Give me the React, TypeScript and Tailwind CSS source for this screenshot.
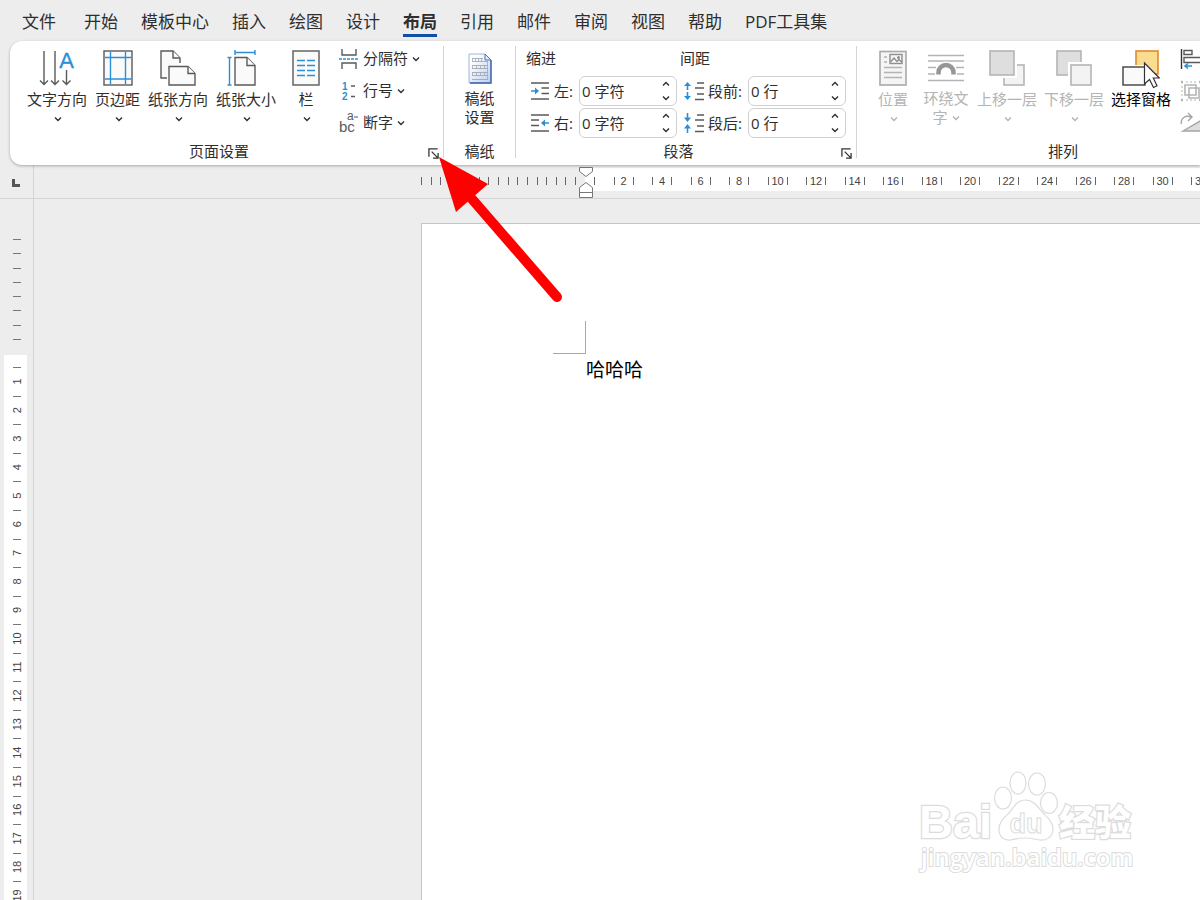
import type { ReactNode } from "react"

const tabs = ["开始", "模板中心", "插入", "绘图", "设计", "布局", "引用", "邮件", "审阅", "视图", "帮助", "PDF工具集"]

const DARK = "#5a5a5a"
const BLUE = "#2b8fd6"
const GREY = "#b4b4b4"

function Chevron({ up }: { up?: boolean }) {
  return (
    <svg width="8" height="6" viewBox="0 0 8 6" fill="none" stroke="currentColor" strokeWidth="1.4" className="shrink-0">
      <path d={up ? "M1 4.5 4 1.5 7 4.5" : "M1 1.5 4 4.5 7 1.5"} />
    </svg>
  )
}

type BigProps = { icon: ReactNode; label: string; chevron?: boolean; disabled?: boolean; className?: string }

function BigButton({ icon, label, chevron = true, disabled, className = "" }: BigProps) {
  return (
    <button disabled={disabled} className={`flex shrink-0 flex-col items-center pt-[3px] text-[15px] leading-5 whitespace-nowrap disabled:text-[#b4b4b4] ${className}`}>
      {icon}
      <span className="mt-0.5">{label}</span>
      {chevron && <span className="ml-0.5 flex h-5 items-center"><Chevron /></span>}
    </button>
  )
}

function SmallButton({ icon, label }: { icon: ReactNode; label: string }) {
  return (
    <button className="flex h-[26px] items-center text-[15px] leading-5 whitespace-nowrap">
      <span className="mr-1">{icon}</span>
      <span className="pb-0.5">{label}</span>
      <span className="ml-1"><Chevron /></span>
    </button>
  )
}

function Launcher({ name }: { name: string }) {
  return (
    <button aria-label={name} className="mr-1 pt-1">
      <svg width="11" height="11" viewBox="0 0 12 12" fill="none" stroke="#333" strokeWidth="1.4">
        <path d="M1 9.500V1h9.500M4 4l6.500 6.500M11 5.500V11H5.500" />
      </svg>
    </button>
  )
}

function Group({ title, launcher, className = "", children }: { title: string; launcher?: boolean; className?: string; children: ReactNode }) {
  return (
    <section aria-label={title} className={`shrink-0 ${className}`}>
      <div className="flex h-[95px] items-start">{children}</div>
      <div className="flex h-5 items-center">
        <h2 className="flex-1 text-center text-[15px] leading-5">{title}</h2>
        {launcher && <Launcher name={title} />}
      </div>
    </section>
  )
}

function Divider() {
  return <div className="h-28 w-px shrink-0 bg-[#d6d6d6]" />
}

function SpinField({ id, icon, label, value, labelClass }: { id: string; icon: ReactNode; label: string; value: string; labelClass: string }) {
  return (
    <div className="flex items-center pl-1">
      {icon}
      <label htmlFor={id} className={`ml-1 shrink-0 text-[15px] leading-5 whitespace-nowrap ${labelClass}`}>{label}</label>
      <div className="flex h-[30px] w-[98px] rounded-md border border-[#d0d0d0] bg-white">
        <input id={id} defaultValue={value} className="w-0 flex-1 bg-transparent pl-0.5 text-[15px] outline-none" />
        <div className="flex w-5 flex-col justify-between py-[3px]">
          <button aria-label={`${label} +`} className="flex h-2 items-center justify-center"><Chevron up /></button>
          <button aria-label={`${label} -`} className="flex h-2 items-center justify-center"><Chevron /></button>
        </div>
      </div>
    </div>
  )
}

function TextDirectionIcon() {
  return (
    <svg width="36" height="38" viewBox="0 0 36 38" fill="none" stroke={DARK} strokeWidth="1.4">
      <path d="M5 2v33M1 31.500l4 4 4-4M16 2v33M12 31.500l4 4 4-4M27.500 21v14M23.500 31.500l4 4 4-4" />
      <text x="27.500" y="19" textAnchor="middle" fontSize="22" stroke={BLUE} strokeWidth="0.3" fill={BLUE} className="font-['Liberation_Sans']">A</text>
    </svg>
  )
}

function MarginsIcon() {
  return (
    <svg width="30" height="38" viewBox="0 0 30 38" fill="none" strokeWidth="1.4">
      <rect x="1" y="2" width="28" height="34" fill="#fafafa" stroke={DARK} />
      <path d="M7.500 3v32M22.500 3v32M2 8.500h26M2 30h26" stroke={BLUE} />
    </svg>
  )
}

function OrientationIcon() {
  return (
    <svg width="36" height="38" viewBox="0 0 36 38" fill="#fafafa" stroke={DARK} strokeWidth="1.4">
      <path d="M7 29H1V2h12l7 7v5" />
      <path d="M13 2v7h7" />
      <path d="M9 17.500h19l7 7V36H9z" />
      <path d="M28 17.500v7h7" />
    </svg>
  )
}

function SizeIcon() {
  return (
    <svg width="40" height="38" viewBox="0 0 40 38" fill="#fafafa" stroke={DARK} strokeWidth="1.4">
      <path d="M9 8.500h12l8 8V36H9z" />
      <path d="M21 8.500v8h8" />
      <path d="M9 3.500h20M9 1v5M29 1v5M3.500 9v27M1.500 8.500h4M1.500 36h4" stroke={BLUE} />
    </svg>
  )
}

function ColumnsIcon() {
  return (
    <svg width="28" height="38" viewBox="0 0 28 38" fill="#fafafa" strokeWidth="1.4">
      <rect x="1" y="2" width="26" height="34" stroke={DARK} />
      <path d="M5 11.500h8M15 11.500h8M5 16.500h8M15 16.500h8M5 21.500h8M15 21.500h8M5 26.500h8M15 26.500h8" stroke={BLUE} />
    </svg>
  )
}

function BreaksIcon() {
  return (
    <svg width="20" height="20" viewBox="0 0 20 20" fill="none" stroke={DARK} strokeWidth="1.4">
      <path d="M3 0v6h14V0M3 20v-6h14v6" />
      <path d="M0 10h20" stroke={BLUE} strokeDasharray="3 1" />
    </svg>
  )
}

function LineNumbersIcon() {
  return (
    <svg width="20" height="24" viewBox="0 0 20 24" className="font-['Liberation_Sans']">
      <text x="3" y="11" fontSize="10" fontWeight="700" fill={BLUE}>1</text>
      <text x="3" y="21" fontSize="10" fontWeight="700" fill={BLUE}>2</text>
      <path d="M12 7h4M12 17.500h4" stroke={DARK} strokeWidth="1.4" />
    </svg>
  )
}

function HyphenIcon() {
  return (
    <svg width="20" height="26" viewBox="0 0 20 26" fill={DARK} className="font-['Liberation_Sans']">
      <text x="8" y="10" fontSize="12">a</text>
      <text x="0" y="22" fontSize="15">bc</text>
      <path d="M15 7h4" stroke={DARK} strokeWidth="1.2" />
    </svg>
  )
}

function ManuscriptIcon() {
  return (
    <svg width="26" height="38" viewBox="0 0 26 38">
      <defs>
        <linearGradient id="paper" x1="0" y1="0" x2="1" y2="1">
          <stop offset="0.2" stopColor="#fdfeff" />
          <stop offset="1" stopColor="#b9cdf0" />
        </linearGradient>
      </defs>
      <path d="M2 5h16l6 6v23H2z" fill="url(#paper)" stroke="#9db4da" />
      <path d="M24 11v23H3" fill="none" stroke="#3c62a8" strokeWidth="1.4" />
      <path d="M18 5v6h6z" fill="#dbe8fb" stroke="#4f79b8" />
      <path d="M5 9.500h11M5 12.500h16M5 16.500h16M5 19.500h16M5 23.500h16M5 26.500h16M5 30.500h16" stroke="#9a9fab" strokeWidth="0.8" />
      <path d="M5.500 9v3M8.500 9v3M11.500 9v3M14.500 9v3M5.500 16v4M9.500 16v4M13.500 16v4M17.500 16v4M20.500 12v18M5.500 23v4M9.500 23v4M13.500 23v4M17.500 23v4" stroke="#a5a9b4" strokeWidth="0.8" />
    </svg>
  )
}

function IndentIcon({ right }: { right?: boolean }) {
  return (
    <svg width="20" height="18" viewBox="0 0 20 18" fill="none" stroke={DARK} strokeWidth="1.4" className="shrink-0">
      <path d={right ? "M1 1h18M1 6h8M1 11.500h8M1 17h18" : "M1 1h18M11.500 6H19M11.500 11.500H19M1 17h18"} />
      <path d={right ? "M19 9h-6" : "M1 9h6"} stroke={BLUE} strokeWidth="1.6" />
      <path d={right ? "M15 5.500 11 9l4 3.500z" : "M5 5.500 9 9l-4 3.500z"} fill={BLUE} stroke="none" />
    </svg>
  )
}

function SpacingIcon({ after }: { after?: boolean }) {
  return (
    <svg width="20" height="20" viewBox="0 0 20 20" fill="none" stroke={DARK} strokeWidth="1.4" className="shrink-0">
      <path d={after ? "M13 2h7M11 7h9M13 13h7M11 18.500h9" : "M13 2h7M11 7h9M13 13h7M11 18.500h9"} />
      <path d={after ? "M3.500 0v5M3.500 20v-5" : "M3.500 3v6M3.500 11v6"} stroke={BLUE} strokeWidth="1.6" />
      <path d={after ? "M0 4.500h7L3.500 9zM0 15.500h7L3.500 11z" : "M0 5h7L3.500 1zM0 15h7l-3.500 4z"} fill={BLUE} stroke="none" />
    </svg>
  )
}

function PositionIcon() {
  return (
    <svg width="30" height="38" viewBox="0 0 30 38" fill="none" stroke={GREY} strokeWidth="1.4">
      <rect x="2" y="2.500" width="26" height="33.500" fill="#f5f5f5" stroke="#a9a9a9" strokeWidth="1.6" />
      <path d="M6 8h3M6 13h3M6 18.500h18M6 23.500h18M6 28.500h18" />
      <rect x="12" y="5.500" width="12" height="9" stroke="#8e8e8e" />
      <path d="M12.500 13l3.500-4 3 3.500 2-2 3 3" stroke="#8e8e8e" />
      <circle cx="20.500" cy="8.500" r="0.8" stroke="#8e8e8e" />
    </svg>
  )
}

function WrapIcon() {
  return (
    <svg width="36" height="38" viewBox="0 0 36 38" fill="none" stroke={GREY} strokeWidth="1.4">
      <path d="M0 6.500h36M0 12h36M0 18.500h8M28 18.500h8M0 25h7M29 25h7M0 31.500h36" />
      <path d="M10.500 25.500v-2a7.500 7.500 0 0 1 15 0v2" stroke="#fff" strokeWidth="7" />
      <path d="M10.500 25.500v-2a7.500 7.500 0 0 1 15 0v2" stroke="#969696" strokeWidth="4.500" />
    </svg>
  )
}

function LayerIcon({ back }: { back?: boolean }) {
  const behind = <rect x="16" y="16" width="20" height="20" fill="#f3f3f3" stroke={GREY} strokeWidth="1.6" />
  return (
    <svg width="38" height="38" viewBox="0 0 38 38">
      {!back && behind}
      {!back && <path d="M0 0h29v29H0z" fill="#fff" />}
      <rect x="2" y="2" width="24" height="24" fill="#dedede" stroke={GREY} strokeWidth="1.6" />
      {back && <path d="M13 13h25v25H13z" fill="#fff" />}
      {back && behind}
    </svg>
  )
}

function SelectionPaneIcon() {
  return (
    <svg width="38" height="40" viewBox="0 0 38 40" className="-mb-0.5">
      <rect x="14" y="2" width="22" height="23" fill="#f9dc8f" stroke="#e08a2c" strokeWidth="1.6" />
      <path d="M0 16h24v22H0z" fill="#fff" />
      <rect x="1" y="18" width="22" height="18" fill="#fafafa" stroke="#3f3f3f" strokeWidth="1.4" />
      <path d="M22.500 14v21l5-4.500 4 8 3.500-1.700-3.700-7.800h6z" fill="#fff" stroke="#333" strokeWidth="1.2" />
    </svg>
  )
}

function AlignIcon() {
  return (
    <svg width="22" height="22" viewBox="0 0 22 22" fill="none" stroke={DARK} strokeWidth="1.4">
      <path d="M1.500 1v20" stroke="#333" />
      <path d="M4 2.500h8v4H4zM4 9.500h18v5H4z" />
      <path d="M12 18H5M8 15.500 5 18l3 2.500" stroke={BLUE} strokeWidth="1.6" />
    </svg>
  )
}

function GroupIcon() {
  return (
    <svg width="22" height="22" viewBox="0 0 22 22" fill="none" stroke={GREY} strokeWidth="1.6">
      <path d="M5 5h11v10H5zM9 8h10v10H9z" />
      <path d="M1 2h2M1 20h2M19 2h2M19 20h2" strokeWidth="2.500" />
      <path d="M6 2h11M6 20h11M2 6v11" strokeDasharray="2 2" strokeWidth="1" />
    </svg>
  )
}

function RotateIcon() {
  return (
    <svg width="22" height="22" viewBox="0 0 22 22" fill="none" stroke="#a5a5a5" strokeWidth="1.4">
      <path d="M1.500 12C0 6 6 3 11 5M8 1l4 4-4 4" />
      <path d="M3 19 22 8v11z" fill="#dedede" />
    </svg>
  )
}

function Ribbon() {
  return (
    <div className="relative z-10 ml-2.5 flex items-start overflow-hidden rounded-l-xl bg-white pt-[5px] pb-1 shadow-[0_1px_3px_rgba(0,0,0,0.3)]">
      <Group title="页面设置" launcher className="w-[433px]">
        <div className="flex gap-2 pl-[17px]">
          <BigButton icon={<TextDirectionIcon />} label="文字方向" />
          <BigButton icon={<MarginsIcon />} label="页边距" />
          <BigButton icon={<OrientationIcon />} label="纸张方向" />
          <BigButton icon={<SizeIcon />} label="纸张大小" />
          <BigButton icon={<ColumnsIcon />} label="栏" className="w-11" />
        </div>
        <div className="flex flex-col gap-1.5 pl-[11px]">
          <SmallButton icon={<BreaksIcon />} label="分隔符" />
          <SmallButton icon={<LineNumbersIcon />} label="行号" />
          <SmallButton icon={<HyphenIcon />} label="断字" />
        </div>
      </Group>
      <Divider />
      <Group title="稿纸" className="w-[71px]">
        <button className="mx-auto flex w-10 flex-col items-center pt-[3px] text-[15px] leading-[19px]">
          <ManuscriptIcon />
          <span className="mt-0.5 w-8">稿纸设置</span>
        </button>
      </Group>
      <Divider />
      <Group title="段落" launcher className="w-[340px]">
        <div className="ml-2.5 flex w-[151px] flex-col gap-0.5 pt-0.5">
          <h3 className="mb-1.5 text-[15px] leading-5">缩进</h3>
          <SpinField id="indent-left" icon={<IndentIcon />} label="左:" value="0 字符" labelClass="w-[25px]" />
          <SpinField id="indent-right" icon={<IndentIcon right />} label="右:" value="0 字符" labelClass="w-[25px]" />
        </div>
        <div className="ml-[3px] flex w-[166px] flex-col gap-0.5 pt-0.5">
          <h3 className="mb-1.5 text-[15px] leading-5">间距</h3>
          <SpinField id="space-before" icon={<SpacingIcon />} label="段前:" value="0 行" labelClass="w-10" />
          <SpinField id="space-after" icon={<SpacingIcon after />} label="段后:" value="0 行" labelClass="w-10" />
        </div>
      </Group>
      <Divider />
      <Group title="排列" className="w-[412px]">
        <div className="flex gap-[7px] pl-[21px]">
          <BigButton icon={<PositionIcon />} label="位置" disabled />
          <button disabled className="mr-px ml-2 flex w-[46px] flex-col items-center pt-[3px] text-[15px] leading-[19px] text-[#b4b4b4]">
            <WrapIcon />
            <span className="mt-0.5 whitespace-nowrap">环绕文</span>
            <span className="flex items-center gap-1">字<Chevron /></span>
          </button>
          <BigButton icon={<LayerIcon />} label="上移一层" disabled />
          <BigButton icon={<LayerIcon back />} label="下移一层" disabled />
          <BigButton icon={<SelectionPaneIcon />} label="选择窗格" chevron={false} className="text-black" />
        </div>
        <div className="flex flex-col gap-1.5 pl-[9px]">
          <button aria-label="对齐" className="flex h-[26px] items-center"><AlignIcon /></button>
          <button aria-label="组合" disabled className="flex h-[26px] items-center"><GroupIcon /></button>
          <button aria-label="旋转" disabled className="flex h-[26px] items-center"><RotateIcon /></button>
        </div>
      </Group>
    </div>
  )
}

// two characters per label, half-step ticks on each side of it
const CHAR = 19.25
const ZERO = 551

function HorizontalRuler() {
  const before = Array.from({ length: 17 }, (_, i) => ZERO - 10 - i * (CHAR / 2))
  const labels = Array.from({ length: 16 }, (_, i) => (i + 1) * 2)
  return (
    <svg className="h-[33px] w-0 flex-1" stroke="#666" fill="none">
      <rect x={ZERO} y="3" width="100%" height="23" fill="#fff" stroke="none" />
      {before.map((x) => <path key={x} d={`M${Math.round(x) + 0.5} 12v8`} />)}
      <path d={`M${ZERO + 9.5} 12v8`} />
      {labels.map((n) => {
        const x = ZERO + n * CHAR
        return (
          <g key={n}>
            <path d={`M${Math.round(x - 10) + 0.5} 12v8M${Math.round(x + 9) + 0.5} 12v8`} />
            <text x={x} y="20" textAnchor="middle" fontSize="11" stroke="none" fill="#444">{n}</text>
          </g>
        )
      })}
      <g fill="#fff" stroke="#777" transform={`translate(${ZERO - 6} 0)`}>
        <path d="M.5 2.500h13v4l-6.500 5-6.500-5z" />
        <path d="M.5 32.500v-10l6.500-5 6.500 5v10zM.5 27.500h13" />
      </g>
    </svg>
  )
}

const LINE = 28.55
const TOP = 155

function VerticalRuler() {
  const before = Array.from({ length: 8 }, (_, i) => TOP - 15 - i * (LINE / 2))
  const labels = Array.from({ length: 19 }, (_, i) => i + 1)
  return (
    <svg className="h-full w-[33px] shrink-0" stroke="#777" fill="none">
      <rect x="4" y={TOP + 1} width="23" height="100%" fill="#fff" stroke="none" />
      {before.map((y) => <path key={y} d={`M13 ${Math.round(y) + 0.5}h8`} />)}
      {labels.map((n) => {
        const y = TOP - 1 + n * LINE
        return (
          <g key={n}>
            <path d={`M13 ${Math.round(y - LINE / 2) + 0.5}h8`} />
            <text transform={`translate(21 ${y}) rotate(-90)`} textAnchor="middle" fontSize="11" stroke="none" fill="#444">{n}</text>
          </g>
        )
      })}
    </svg>
  )
}

function Watermark() {
  return (
    <svg width="224" height="112" viewBox="0 0 224 112" fill="#fff" stroke="#dcdcdc" strokeWidth="1.2" className="absolute right-[58px] bottom-[18px]">
      <g paintOrder="stroke" strokeWidth="2.500">
        <text x="1" y="68" fontSize="47" fontWeight="700" className="font-['Liberation_Sans',sans-serif]">Bai</text>
        <text x="141" y="66" fontSize="36" fontWeight="900" className="font-['Noto_Sans_CJK_SC',sans-serif]">经验</text>
        <text x="3" y="96" fontSize="24" fontWeight="600" strokeWidth="2" className="font-['Open_Sans',sans-serif]">jingyan.baidu.com</text>
      </g>
      <ellipse cx="85" cy="28" rx="8.500" ry="11" />
      <ellipse cx="100" cy="13" rx="8" ry="11" />
      <ellipse cx="119" cy="14" rx="8.500" ry="11" />
      <ellipse cx="131" cy="33" rx="8.500" ry="10.500" />
      <path d="M107 30c9 0 13 7 18 13 5 5 10 9 10 16 0 8-7 12-13 11-6-1-9-2-15-2s-9 1-14 2c-7 1-12-3-12-11 0-7 5-11 10-16 5-6 8-13 16-13z" />
      <text x="108" y="63" textAnchor="middle" fontSize="27" fontWeight="700" strokeWidth="1" className="font-['Liberation_Sans',sans-serif]">du</text>
    </svg>
  )
}

function PointerArrow() {
  return (
    <svg width="126" height="148" viewBox="0 0 126 148" className="absolute top-[157px] left-[438px] z-20">
      <path d="M34 42 119 140" stroke="#f00" strokeWidth="10" strokeLinecap="round" />
      <path d="M1 0 50 27 18 55z" fill="#f00" />
    </svg>
  )
}

export default function App() {
  return (
    <div className="relative flex h-screen flex-col overflow-hidden bg-[#ededed] font-['Open_Sans','Noto_Sans_CJK_SC',sans-serif] text-[#2e2e2e]">
      <nav className="flex h-[41px] shrink-0 items-start gap-[23px] pt-2.5 pl-[22px] text-[17px] leading-6 whitespace-nowrap">
        <a href="#" className="mr-[5px]">文件</a>
        {tabs.map((t) => (
          <a key={t} href="#" className={t === "布局" ? "border-b-3 border-[#124ea5] font-bold" : ""}>{t}</a>
        ))}
      </nav>
      <Ribbon />
      <div className="flex shrink-0 border-b border-[#d4d4d4] font-['Liberation_Sans',sans-serif]">
        <div className="w-[34px] border-r border-[#d4d4d4] pt-3.5 pl-3">
          <div className="size-2 border-b-3 border-l-3 border-[#555]" />
        </div>
        <HorizontalRuler />
      </div>
      <div className="flex min-h-0 flex-1">
        <div className="border-r border-[#d4d4d4] font-['Liberation_Sans',sans-serif]">
          <VerticalRuler />
        </div>
        <main className="flex flex-1 pt-6 pl-[387px]">
          <article className="flex-1 border-t border-l border-[#c6c6c6] bg-white pt-[97px] pl-[131px]">
            <div className="size-[33px] border-r border-b border-[#a8a8a8]" />
            <p className="pt-0.5 pl-[33px] text-[19px] leading-7 text-black">哈哈哈</p>
          </article>
        </main>
      </div>
      <PointerArrow />
      <Watermark />
    </div>
  )
}
